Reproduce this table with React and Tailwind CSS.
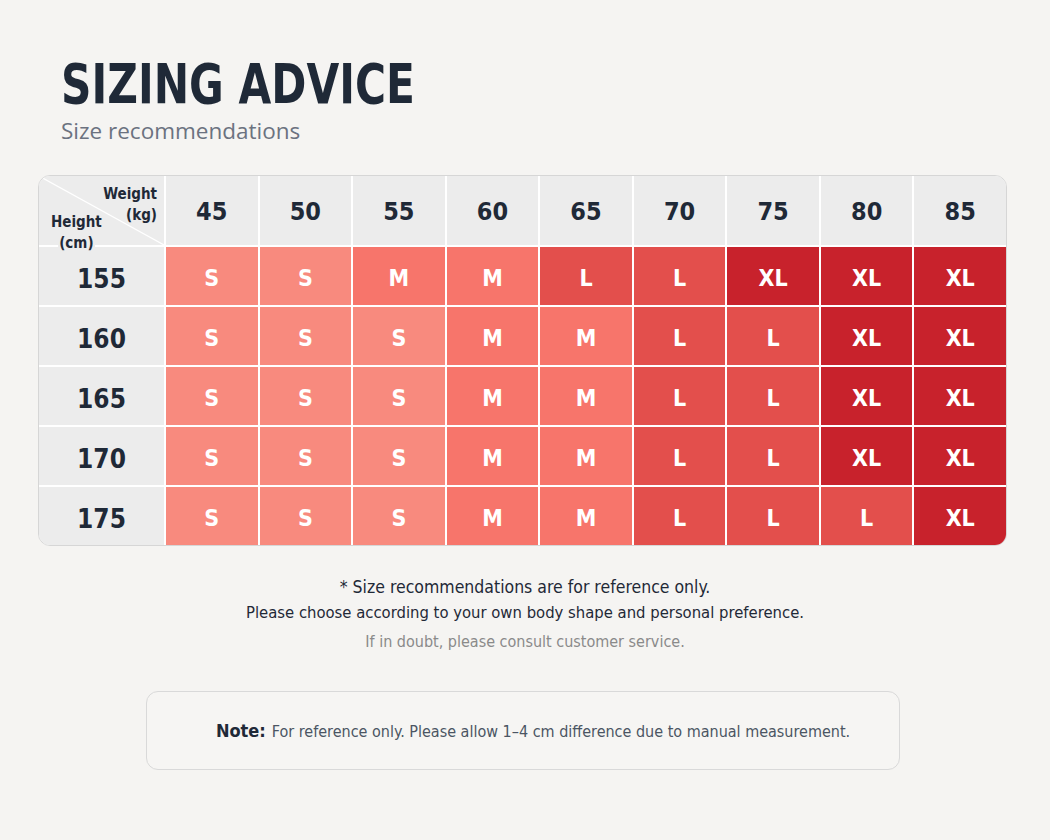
import React from "react";

const weights = [45, 50, 55, 60, 65, 70, 75, 80, 85];

const rows = [
  { height: 155, sizes: ["S", "S", "M", "M", "L", "L", "XL", "XL", "XL"] },
  { height: 160, sizes: ["S", "S", "S", "M", "M", "L", "L", "XL", "XL"] },
  { height: 165, sizes: ["S", "S", "S", "M", "M", "L", "L", "XL", "XL"] },
  { height: 170, sizes: ["S", "S", "S", "M", "M", "L", "L", "XL", "XL"] },
  { height: 175, sizes: ["S", "S", "S", "M", "M", "L", "L", "L", "XL"] },
];

const sizeColors = {
  S: "bg-[#f88a7e]",
  M: "bg-[#f7756b]",
  L: "bg-[#e34f4c]",
  XL: "bg-[#c8222c]",
};

const narrow = "font-['DejaVu_Sans_Condensed','Liberation_Sans_Narrow',sans-serif]";

const CornerCell = () => (
  <div className="relative z-10 h-[69px] bg-[#ececec] text-[15px] font-bold leading-[21px] text-[#1f2937]">
    <svg className="absolute inset-0 h-full w-full" preserveAspectRatio="none" viewBox="0 0 100 100">
      <line x1="0" y1="0" x2="100" y2="100" stroke="#ffffff" strokeWidth="1.2" vectorEffect="non-scaling-stroke" />
    </svg>
    <div className={`relative flex flex-col ${narrow}`}>
      <div className="flex flex-col items-end pt-[8px] pr-[7px]">
        <span>Weight</span>
        <span>(kg)</span>
      </div>
      <div className="-mt-[14px] flex w-fit flex-col items-center pl-[11px]">
        <span className="px-[1px]">Height</span>
        <span className="bg-[#ececec] px-[1px]">(cm)</span>
      </div>
    </div>
  </div>
);

const App = () => {
  return (
    <div className="min-h-[840px] w-full bg-[#f5f4f2] px-[38px] pt-[52px] text-[#1f2937]">
      <div className="pl-[23px]">
        <h1
          className={`inline-block origin-left scale-x-[0.84] whitespace-nowrap text-[56px] font-bold leading-[64px] text-[#1f2937] ${narrow}`}
        >
          SIZING ADVICE
        </h1>
        <p className="mt-[1px] font-['Open_Sans','Noto_Sans',sans-serif] text-[22.5px] leading-[28px] text-[#6b7280]">
          Size recommendations
        </p>
      </div>

      <div className="mt-[30px] w-[969px] overflow-hidden rounded-[12px] border border-[#d6d6d6] bg-white">
        <div className="grid grid-cols-[125px_repeat(9,1fr)] gap-[2px]">
          <CornerCell />
          {weights.map((w) => (
            <div
              key={w}
              className={`flex h-[69px] items-center justify-center bg-[#ececec] pt-[3px] text-[25px] font-bold text-[#1f2937] ${narrow}`}
            >
              {w}
            </div>
          ))}
          {rows.map((row) => (
            <React.Fragment key={row.height}>
              <div
                className={`flex h-[58px] items-center justify-center bg-[#ececec] pt-[6px] text-[26px] font-bold text-[#1f2937] ${narrow}`}
              >
                {row.height}
              </div>
              {row.sizes.map((s, i) => (
                <div
                  key={i}
                  className={`flex h-[58px] items-center justify-center pt-[5px] text-[23px] font-bold text-white ${narrow} ${sizeColors[s]}`}
                >
                  {s}
                </div>
              ))}
            </React.Fragment>
          ))}
        </div>
      </div>

      <div className={`mt-[28px] flex flex-col items-center text-center ${narrow}`}>
        <p className="text-[17.5px] leading-[26px] text-[#1f2937]">* Size recommendations are for reference only.</p>
        <p className="text-[16.5px] leading-[26px] text-[#1f2937]">
          Please choose according to your own body shape and personal preference.
        </p>
        <p className="mt-[3px] text-[16px] leading-[26px] text-[#8a8a8a]">If in doubt, please consult customer service.</p>
      </div>

      <div className="ml-[108px] mt-[36px] flex h-[79px] w-[754px] items-center justify-center rounded-[12px] border border-[#d9d9d9] bg-[#f6f5f3]">
        <p className={`pl-[20px] text-[16px] text-[#4b5563] ${narrow}`}>
          <span className="mr-[6px] text-[18px] font-bold text-[#1f2937]">Note:</span>
          For reference only. Please allow 1–4 cm difference due to manual measurement.
        </p>
      </div>
    </div>
  );
};

export default App;
